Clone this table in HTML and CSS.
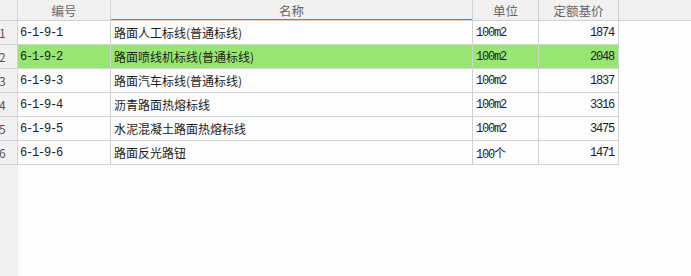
FILE: index.html
```html
<!DOCTYPE html>
<html lang="zh-CN">
<head>
<meta charset="utf-8">
<title>定额列表</title>
<link rel="stylesheet" href="styles.css">
</head>
<body>
<div class="sheet">
  <div class="gutter">
    <div class="corner"></div>
    <div class="rownum">1</div>
    <div class="rownum">2</div>
    <div class="rownum">3</div>
    <div class="rownum">4</div>
    <div class="rownum">5</div>
    <div class="rownum">6</div>
  </div>
  <div class="main">
    <div class="head">
      <div class="hcell c-code">编号</div>
      <div class="hcell c-name sorted">名称</div>
      <div class="hcell c-unit">单位</div>
      <div class="hcell c-price">定额基价</div>
      <div class="hcell c-rest"></div>
    </div>
    <div class="row">
      <div class="cell c-code mono">6-1-9-1</div>
      <div class="cell c-name">路面人工标线(普通标线)</div>
      <div class="cell c-unit mono">100m2</div>
      <div class="cell c-price mono num">1874</div>
    </div>
    <div class="row selected">
      <div class="cell c-code mono">6-1-9-2</div>
      <div class="cell c-name">路面喷线机标线(普通标线)</div>
      <div class="cell c-unit mono">100m2</div>
      <div class="cell c-price mono num">2048</div>
    </div>
    <div class="row">
      <div class="cell c-code mono">6-1-9-3</div>
      <div class="cell c-name">路面汽车标线(普通标线)</div>
      <div class="cell c-unit mono">100m2</div>
      <div class="cell c-price mono num">1837</div>
    </div>
    <div class="row">
      <div class="cell c-code mono">6-1-9-4</div>
      <div class="cell c-name">沥青路面热熔标线</div>
      <div class="cell c-unit mono">100m2</div>
      <div class="cell c-price mono num">3316</div>
    </div>
    <div class="row">
      <div class="cell c-code mono">6-1-9-5</div>
      <div class="cell c-name">水泥混凝土路面热熔标线</div>
      <div class="cell c-unit mono">100m2</div>
      <div class="cell c-price mono num">3475</div>
    </div>
    <div class="row">
      <div class="cell c-code mono">6-1-9-6</div>
      <div class="cell c-name">路面反光路钮</div>
      <div class="cell c-unit mono">100个</div>
      <div class="cell c-price mono num">1471</div>
    </div>
  </div>
</div>
</body>
</html>
```

FILE: styles.css
```css
* { box-sizing: border-box; }

html, body {
  margin: 0;
  height: 100%;
  background: #fdfdfd;
}

body {
  font-family: "Noto Sans CJK SC", "Noto Sans", sans-serif;
  font-size: 12px;
  color: #1c1c1c;
}

.sheet {
  display: flex;
  height: 100%;
}

/* row-number gutter, grey all the way down */
.gutter {
  width: 18px;
  flex: none;
  background: #f1f1f1;
  display: flex;
  flex-direction: column;
}

.corner {
  height: 21px;
  border-right: 1px solid #d2d2d2;
  border-bottom: 1px solid #d2d2d2;
}

.rownum {
  height: 24px;
  border-right: 1px solid #d2d2d2;
  border-bottom: 1px solid #d2d2d2;
  display: flex;
  align-items: center;
  text-indent: -1px;
  color: #555;
  font-size: 12px;
  overflow: hidden;
}

.main {
  flex: 1;
  display: flex;
  flex-direction: column;
}

.head {
  display: flex;
  height: 21px;
  background: #f1f1f1;
  border-bottom: 1px solid #d2d2d2;
}

.hcell {
  display: flex;
  align-items: center;
  justify-content: center;
  color: #666;
  font-size: 12.5px;
  border-right: 1px solid #d2d2d2;
  padding-top: 1px;
}

.hcell.sorted {
  box-shadow: inset 0 -1px 0 #3b8fd3;
}

.hcell.c-rest {
  flex: 1;
  border-right: none;
}

.row {
  display: flex;
  height: 24px;
  width: 601px;
  background: #fdfdfd;
  border-bottom: 1px solid #d2d2d2;
}

.row.selected {
  background: #98e672;
}

.cell {
  display: flex;
  align-items: center;
  padding: 0 3px;
  border-right: 1px solid #d2d2d2;
  white-space: nowrap;
  overflow: hidden;
}

.c-code  { width: 93px; flex: none; }
.c-name  { width: 362px; flex: none; }
.c-unit  { width: 66px; flex: none; }
.c-price { width: 80px; flex: none; }

.cell.c-code { padding-left: 2px; }

.mono {
  font-family: "Liberation Mono", "Noto Sans CJK SC", monospace;
  font-size: 12px;
  letter-spacing: -1.2px;
  color: #1a1a2a;
}

.num {
  justify-content: flex-end;
  padding-right: 4px;
}
```
